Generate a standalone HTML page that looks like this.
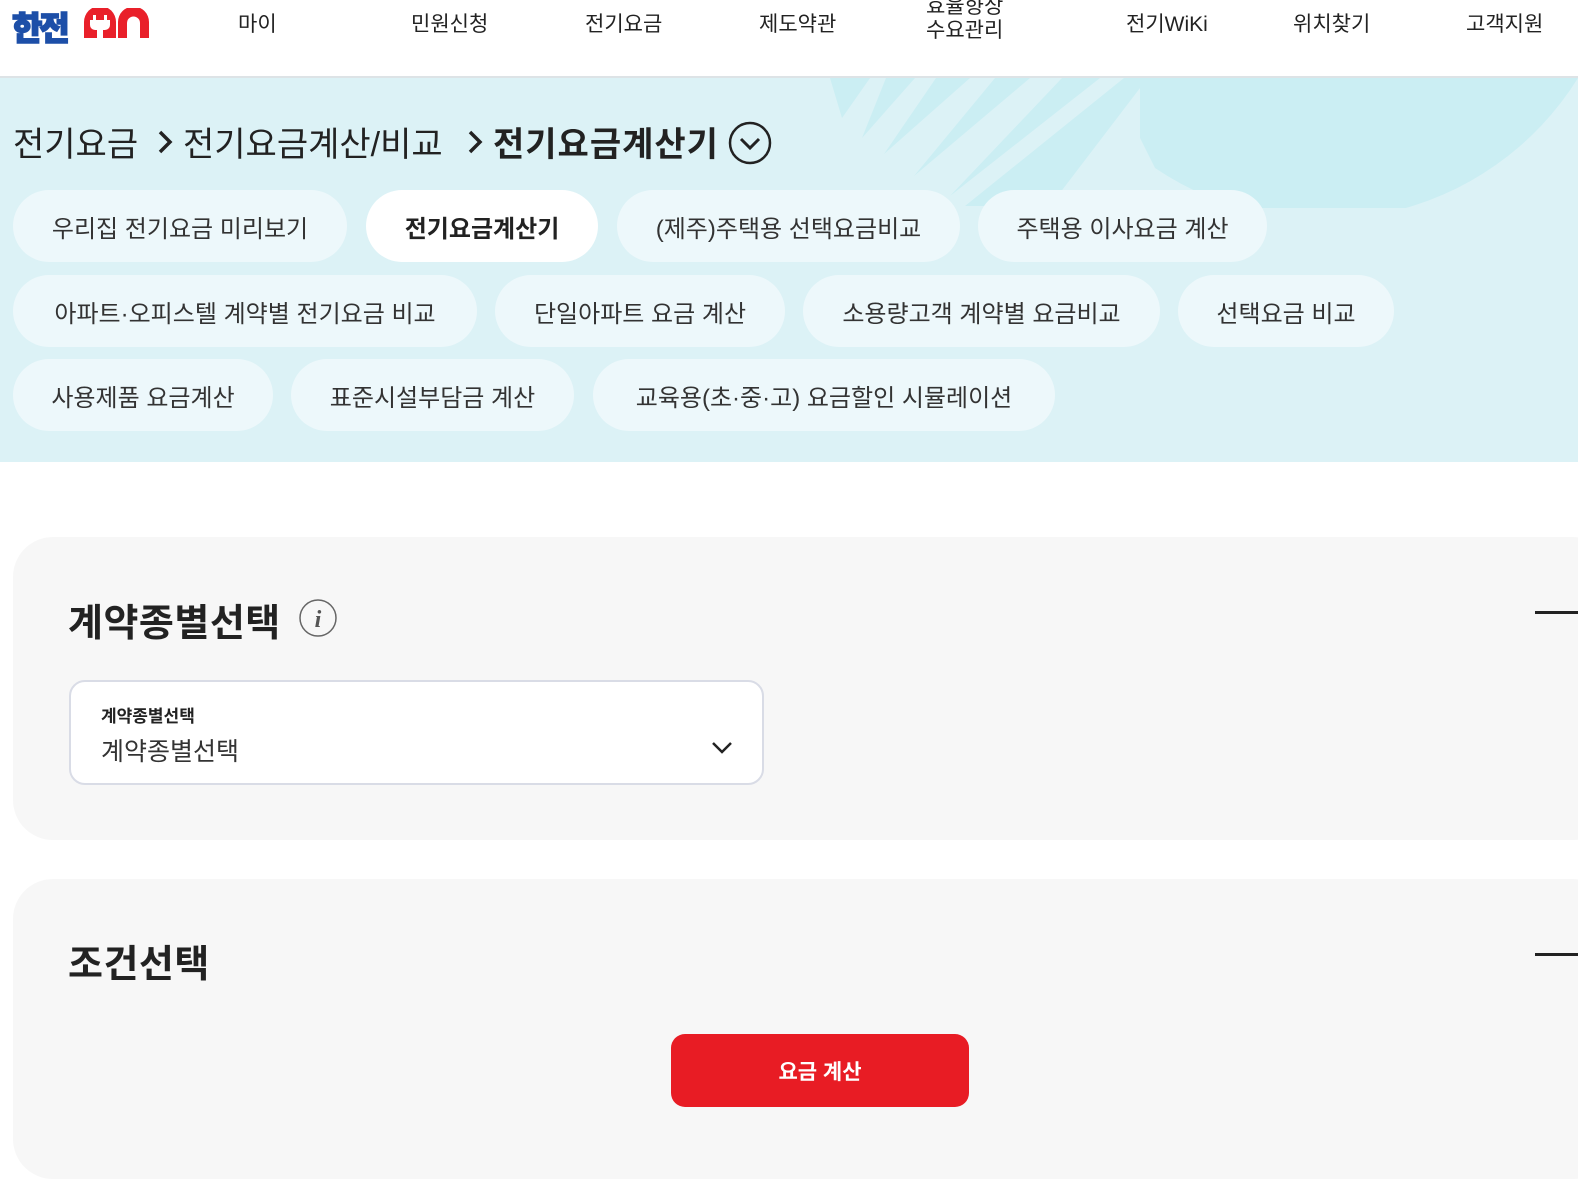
<!DOCTYPE html>
<html><head><meta charset="utf-8"><style>
*{margin:0;padding:0;box-sizing:border-box}
body{width:1578px;height:1151px;overflow:hidden;background:#fff;font-family:"Liberation Sans","Noto Sans CJK KR",sans-serif;color:#222;position:relative}
.a{position:absolute;white-space:nowrap}
.nav{font-size:21px;color:#222;top:8px}
.hero{position:absolute;left:0;top:78px;width:1578px;height:384px;background:#dcf2f6;overflow:hidden}
.chip{position:absolute;height:72px;border-radius:36px;background:#edf8fb;font-size:24px;color:#333;display:flex;align-items:center;justify-content:center}
.card{position:absolute;left:13px;width:1600px;background:#f7f7f7;border-radius:40px}
.bc{font-size:34px;color:#222;top:117px}
</style></head><body>
<div class="a" style="left:12px;top:2px;font-size:33px;font-weight:900;color:#1d4fa8;letter-spacing:-3px;-webkit-text-stroke:1.5px #1d4fa8">한전</div>
<svg class="a" style="left:83px;top:8px" width="67" height="30" viewBox="0 0 67 30"><path d="M1 30V14A14 14 0 0 1 33 14V30Z" fill="#e9202a"/><rect x="10" y="7" width="3" height="6" fill="#fff"/><rect x="21" y="7" width="3" height="6" fill="#fff"/><path d="M7 12H27V17A5 5 0 0 1 22 22H20V30H14V22H12A5 5 0 0 1 7 17Z" fill="#fff"/><path d="M35 30V14A14 14 0 0 1 66 14V30H57V15A6 6 0 0 0 44 15V30Z" fill="#e9202a"/></svg>
<div class="a nav" style="left:238px">마이</div>
<div class="a nav" style="left:411px">민원신청</div>
<div class="a nav" style="left:585px">전기요금</div>
<div class="a nav" style="left:759px">제도약관</div>
<div class="a nav" style="left:926px;top:-5px;line-height:24px">효율향상<br>수요관리</div>
<div class="a nav" style="left:1126px">전기WiKi</div>
<div class="a nav" style="left:1293px">위치찾기</div>
<div class="a nav" style="left:1466px">고객지원</div>
<div class="a" style="left:0;top:76px;width:1578px;height:2px;background:#dde3e6"></div>
<div class="hero">
<svg class="a" style="left:800px;top:0" width="778" height="130" viewBox="0 0 778 130"><g fill="#cbeef3"><path d="M30 0L70 0L42 40Z"/><path d="M86 0L115 0L62 60Z"/><path d="M136 0L170 0L84 76Z"/><path d="M195 0L230 0L114 98Z"/><path d="M262 0L300 0L150 118Z"/><path d="M324 0L340 0L340 10L250 128L165 128Z"/><path d="M340 0H778V0A300 300 0 0 1 355 90L340 60Z"/></g></svg>
</div>
<div class="a bc" style="left:13px">전기요금</div>
<svg class="a" style="left:156px;top:128px" width="18" height="28" viewBox="0 0 18 28"><path d="M4 4L14 14L4 24" fill="none" stroke="#222" stroke-width="3.5"/></svg>
<div class="a bc" style="left:183px">전기요금계산/비교</div>
<svg class="a" style="left:466px;top:128px" width="18" height="28" viewBox="0 0 18 28"><path d="M4 4L14 14L4 24" fill="none" stroke="#222" stroke-width="3.5"/></svg>
<div class="a bc" style="left:493px;font-weight:700;letter-spacing:1px">전기요금계산기</div>
<svg class="a" style="left:728px;top:121px" width="44" height="44" viewBox="0 0 44 44"><circle cx="22" cy="22" r="20" fill="none" stroke="#222" stroke-width="2.5"/><path d="M13 18L22 27L31 18" fill="none" stroke="#222" stroke-width="3"/></svg>
<div class="chip" style="left:13px;top:190px;width:334px">우리집 전기요금 미리보기</div>
<div class="chip" style="left:366px;top:190px;width:232px;background:#fff;font-weight:700;color:#222">전기요금계산기</div>
<div class="chip" style="left:617px;top:190px;width:343px">(제주)주택용 선택요금비교</div>
<div class="chip" style="left:978px;top:190px;width:289px">주택용 이사요금 계산</div>
<div class="chip" style="left:13px;top:275px;width:464px">아파트·오피스텔 계약별 전기요금 비교</div>
<div class="chip" style="left:495px;top:275px;width:290px">단일아파트 요금 계산</div>
<div class="chip" style="left:803px;top:275px;width:357px">소용량고객 계약별 요금비교</div>
<div class="chip" style="left:1178px;top:275px;width:216px">선택요금 비교</div>
<div class="chip" style="left:13px;top:359px;width:260px">사용제품 요금계산</div>
<div class="chip" style="left:291px;top:359px;width:283px">표준시설부담금 계산</div>
<div class="chip" style="left:593px;top:359px;width:462px">교육용(초·중·고) 요금할인 시뮬레이션</div>
<div class="card" style="top:537px;height:303px"></div>
<div class="a" style="left:68px;top:592px;font-size:38px;font-weight:700;color:#222;letter-spacing:0.5px">계약종별선택</div>
<svg class="a" style="left:298px;top:598px" width="40" height="40" viewBox="0 0 40 40"><circle cx="20" cy="20" r="18" fill="none" stroke="#666" stroke-width="1.5"/><text x="20" y="29" text-anchor="middle" font-family="Liberation Serif" font-style="italic" font-weight="700" font-size="24" fill="#555">i</text></svg>
<div class="a" style="left:1535px;top:611px;width:43px;height:3px;background:#222"></div>
<div class="a" style="left:69px;top:680px;width:695px;height:105px;background:#fff;border:2px solid #d9dce6;border-radius:16px"></div>
<div class="a" style="left:101px;top:702px;font-size:17px;font-weight:700;color:#222">계약종별선택</div>
<div class="a" style="left:101px;top:732px;font-size:25px;color:#333">계약종별선택</div>
<svg class="a" style="left:711px;top:741px" width="22" height="14" viewBox="0 0 22 14"><path d="M2 2L11 11L20 2" fill="none" stroke="#222" stroke-width="2.5"/></svg>
<div class="card" style="top:879px;height:300px"></div>
<div class="a" style="left:68px;top:933px;font-size:38px;font-weight:700;color:#222;letter-spacing:0.5px">조건선택</div>
<div class="a" style="left:1535px;top:953px;width:43px;height:3px;background:#222"></div>
<div class="a" style="left:671px;top:1034px;width:298px;height:73px;background:#e81c24;border-radius:14px;color:#fff;font-size:21px;font-weight:700;display:flex;align-items:center;justify-content:center">요금 계산</div>
</body></html>
